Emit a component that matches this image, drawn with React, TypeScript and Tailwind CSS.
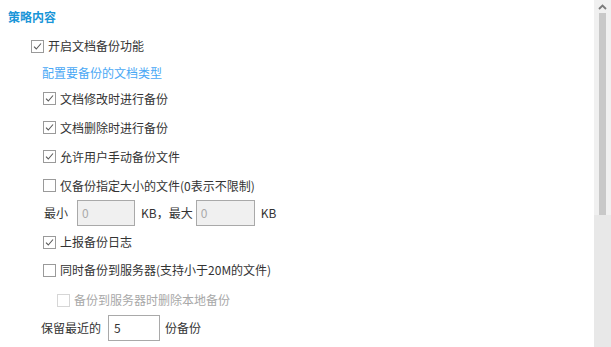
import React from "react";

const font = { fontFamily: '"Microsoft YaHei", "Noto Sans CJK SC", "Noto Sans", sans-serif' };

function Box({ checked, disabled }: { checked?: boolean; disabled?: boolean }) {
  return (
    <span
      className={
        "inline-flex w-[13px] h-[13px] items-center justify-center border bg-white shrink-0 " +
        (disabled ? "border-[#d6d6d6]" : "border-[#9a9a9a]")
      }
    >
      {checked && (
        <svg width="11" height="11" viewBox="0 0 11 11">
          <path d="M2 5.6 L4.3 8 L9 2.5" fill="none" stroke="#5a5a5a" strokeWidth="1.1" />
        </svg>
      )}
    </span>
  );
}

function Row({
  checked,
  disabled,
  label,
  className,
}: {
  checked?: boolean;
  disabled?: boolean;
  label: string;
  className: string;
}) {
  return (
    <div className={"flex items-center " + className}>
      <Box checked={checked} disabled={disabled} />
      <span className={"ml-[4px] text-[12px] " + (disabled ? "text-[#a8a8a8]" : "text-[#333]")}>{label}</span>
    </div>
  );
}

export default function App() {
  return (
    <div className="w-[611px] h-[347px] bg-white flex overflow-hidden" style={font}>
      <div className="flex-1 flex flex-col">
        <div className="h-[34px] flex items-center pl-[8px] text-[12px] font-bold text-[#1a96d8]">策略内容</div>
        <Row checked label="开启文档备份功能" className="h-[24px] pl-[31px]" />
        <div className="mt-[5px] h-[20px] flex items-center pl-[42px] text-[12px] text-[#4aa8f5]">配置要备份的文档类型</div>
        <Row checked label="文档修改时进行备份" className="mt-[1px] h-[29px] pl-[43px]" />
        <Row checked label="文档删除时进行备份" className="h-[29px] pl-[43px]" />
        <Row checked label="允许用户手动备份文件" className="h-[29px] pl-[43px]" />
        <Row label="仅备份指定大小的文件(0表示不限制)" className="h-[29px] pl-[43px]" />
        <div className="h-[26px] flex items-center pl-[44px] text-[12px] text-[#333]">
          <span>最小</span>
          <div className="ml-[9px] w-[58px] h-[26px] border border-[#a9a9a9] bg-[#f0f0f0] flex items-center pl-[4px] text-[#aaa]">0</div>
          <span className="ml-[6px]">KB，最大</span>
          <div className="ml-[3px] w-[59px] h-[26px] border border-[#a9a9a9] bg-[#f0f0f0] flex items-center pl-[4px] text-[#aaa]">0</div>
          <span className="ml-[6px]">KB</span>
        </div>
        <Row checked label="上报备份日志" className="mt-[2px] h-[28px] pl-[43px]" />
        <Row label="同时备份到服务器(支持小于20M的文件)" className="h-[28px] pl-[43px]" />
        <Row disabled label="备份到服务器时删除本地备份" className="mt-[2px] h-[28px] pl-[57px]" />
        <div className="mt-[1px] h-[26px] flex items-center pl-[41px] text-[12px] text-[#333]">
          <span>保留最近的</span>
          <div className="ml-[7px] w-[52px] h-[26px] border border-[#a9a9a9] bg-white flex items-center pl-[5px]">5</div>
          <span className="ml-[5px]">份备份</span>
        </div>
      </div>
      <div className="w-[17px] h-full flex flex-col bg-[#e8e8e8]">
        <div className="h-[13px] bg-[#f0f0f0] flex items-center justify-center">
          <svg width="9" height="6" viewBox="0 0 9 6">
            <path d="M1 5 L4.5 1.5 L8 5" fill="none" stroke="#7a7a7a" strokeWidth="1.8" />
          </svg>
        </div>
        <div className="h-[202px] bg-[#f0f0f0] flex justify-center">
          <div className="w-[7px] h-full bg-[#c8c8c8]" />
        </div>
      </div>
    </div>
  );
}
